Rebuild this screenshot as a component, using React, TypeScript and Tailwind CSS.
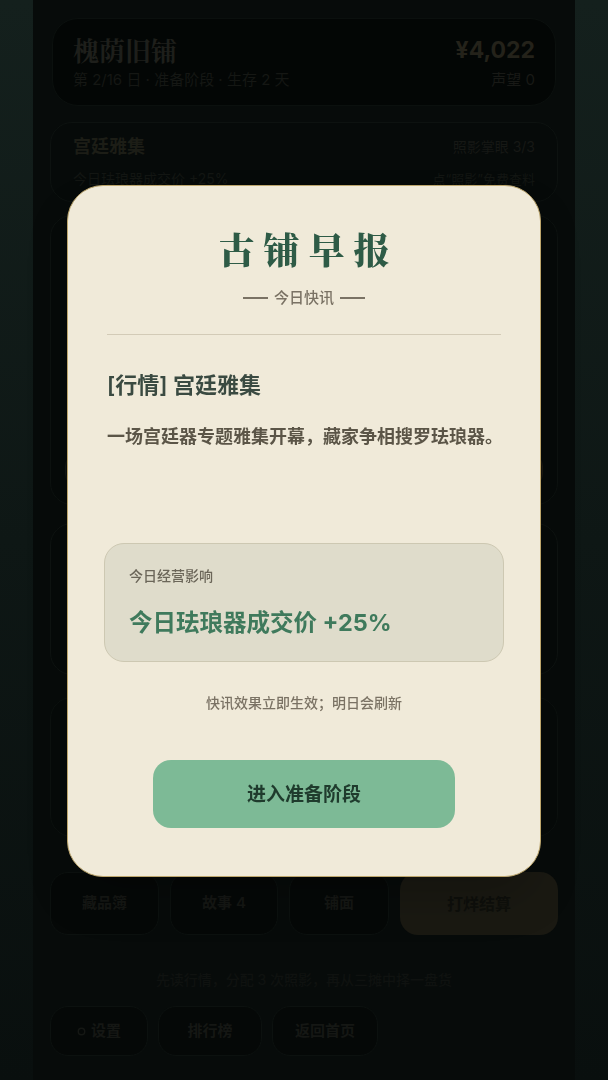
import React from 'react';

const sans = "font-['Inter','Noto_Sans_CJK_SC',sans-serif]";
const serif = "font-['Noto_Serif_CJK_SC','Noto_Sans_CJK_SC',serif]";

const GhostButton: React.FC<{ children: React.ReactNode; className?: string }> = ({ children, className = '' }) => (
  <div
    className={`flex items-center justify-center rounded-[18px] border border-[#0c110f] bg-[#050807] text-[15px] font-semibold text-[#151714] ${className}`}
  >
    {children}
  </div>
);

const ShopBackground: React.FC = () => (
  <div className="min-h-[1080px] w-full bg-gradient-to-b from-[#14201d] via-[#0e1715] to-[#090f0e]">
    <div className="mx-auto flex min-h-[1080px] w-[542px] flex-col bg-[#070b0a] px-[17px] pt-[18px]">
      {/* header */}
      <div className="mx-[2px] flex h-[88px] items-center justify-between rounded-[26px] border border-[#0b100e] bg-[#030605] px-[20px]">
        <div className="flex flex-col gap-[4px]">
          <span className={`${serif} text-[26px] font-bold leading-[32px] text-[#1e1f1b]`}>槐荫旧铺</span>
          <span className="text-[15px] leading-[20px] text-[#151714]">第 2/16 日 · 准备阶段 · 生存 2 天</span>
        </div>
        <div className="flex flex-col items-end gap-[4px]">
          <span className="text-[23px] font-bold leading-[32px] text-[#24221a]">¥4,022</span>
          <span className="text-[15px] leading-[20px] text-[#181916]">声望 0</span>
        </div>
      </div>

      {/* market card */}
      <div className="mt-[16px] flex h-[80px] flex-col gap-[10px] rounded-[22px] border border-[#0d1210] bg-[#060a09] px-[22px] pt-[12px]">
        <div className="flex items-center justify-between">
          <span className="text-[18px] font-bold leading-[24px] text-[#1c1d16]">宫廷雅集</span>
          <span className="text-[14px] leading-[20px] text-[#161815]">照影掌眼 3/3</span>
        </div>
        <div className="flex items-center justify-between">
          <span className="text-[14px] leading-[20px] text-[#131613]">今日珐琅器成交价 +25%</span>
          <span className="text-[13px] leading-[20px] text-[#131613]">点“照影”免费查料</span>
        </div>
      </div>

      {/* cards under the modal */}
      <div className="mt-[13px] flex h-[290px] flex-col justify-end rounded-[22px] border border-[#0d1210] bg-[#060a09] px-[14px] pb-[18px]">
        <div className="grid grid-cols-3 gap-[10px]">
          <div className="h-[32px] rounded-[12px] border border-[#121714] bg-[#0a0e0d]" />
          <div className="h-[32px] rounded-[12px] border border-[#121714] bg-[#0a0e0d]" />
          <div className="h-[32px] rounded-[12px] border border-[#1a1811] bg-[#12110b]" />
        </div>
      </div>
      <div className="mt-[18px] h-[152px] rounded-[22px] border border-[#0e1311] bg-[#060a09]" />
      <div className="mt-[22px] h-[140px] rounded-[22px] border border-[#0c110f] bg-[#060a09]" />

      {/* actions */}
      <div className="mt-[35px] grid h-[63px] grid-cols-[109px_108px_100px_1fr] gap-[11px]">
        <GhostButton>藏品簿</GhostButton>
        <GhostButton>故事 4</GhostButton>
        <GhostButton>铺面</GhostButton>
        <div className="flex items-center justify-center rounded-[18px] bg-[#1a1912] text-[16px] font-bold text-[#0e0f0b]">
          打烊结算
        </div>
      </div>

      <p className="mt-[35px] text-center text-[14px] font-medium leading-[20px] text-[#0f1210]">
        先读行情，分配 3 次照影，再从三摊中择一盘货
      </p>

      <div className="mt-[16px] flex h-[50px] gap-[10px]">
        <GhostButton className="w-[98px] gap-[5px]">
          <svg width="9" height="9" viewBox="0 0 10 10" className="mt-px">
            <circle cx="5" cy="5" r="3.6" fill="none" stroke="#151714" strokeWidth="1.6" />
          </svg>
          设置
        </GhostButton>
        <GhostButton className="w-[104px]">排行榜</GhostButton>
        <GhostButton className="w-[106px]">返回首页</GhostButton>
      </div>
    </div>
  </div>
);

const BriefingModal: React.FC = () => (
  <div className="fixed inset-0 flex justify-center pt-[185px]">
    <div
      className={`${sans} flex h-[692px] w-[474px] flex-col items-stretch rounded-[36px] border border-[#bda66c] bg-[#f0ead9] px-[36px] pt-[41px] shadow-2xl`}
    >
      <h1
        className={`${serif} pl-[9px] text-center text-[36px] font-black leading-[44px] tracking-[0.25em] text-[#2e5b46]`}
      >
        古铺早报
      </h1>
      <div className="mt-[17px] flex h-[20px] items-center justify-center gap-[6px] text-[15px] font-medium text-[#7a7264]">
        <span className="h-[1.5px] w-[25px] bg-[#7a7264]" />
        <span className="leading-[20px]">今日快讯</span>
        <span className="h-[1.5px] w-[25px] bg-[#7a7264]" />
      </div>
      <div className="mx-[3px] mt-[26px] h-px bg-[#d3cbb7]" />

      <h2 className="mx-[3px] mt-[35px] text-[22px] font-semibold leading-[30px] text-[#3a4a41]">[行情] 宫廷雅集</h2>
      <p className="mx-[3px] mt-[24px] whitespace-nowrap text-[18px] font-semibold leading-[26px] text-[#5b5547]">
        一场宫廷器专题雅集开幕，藏家争相搜罗珐琅器。
      </p>

      <div className="mt-[93px] flex h-[119px] flex-col rounded-[20px] border border-[#cdc8b2] bg-[#dfdccb] px-[24px] pt-[22px]">
        <span className="text-[14px] font-medium leading-[20px] text-[#6b6659]">今日经营影响</span>
        <span className="mt-[21px] text-[23.5px] font-bold leading-[32px] text-[#3f7a5c]">今日珐琅器成交价 +25%</span>
      </div>

      <p className="mt-[31px] text-center text-[14px] font-medium leading-[20px] text-[#7a7264]">
        快讯效果立即生效；明日会刷新
      </p>

      <div className="mt-[47px] flex justify-center">
        <button className="flex h-[68px] w-[302px] items-center justify-center rounded-[18px] bg-[#7dba96] pt-[3px] text-[19px] font-bold text-[#1f3b2d]">
          进入准备阶段
        </button>
      </div>
    </div>
  </div>
);

export default function App() {
  return (
    <div className={`${sans} relative`}>
      <ShopBackground />
      <BriefingModal />
    </div>
  );
}
